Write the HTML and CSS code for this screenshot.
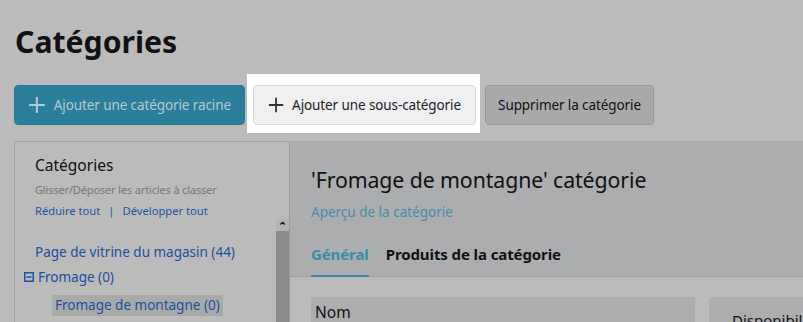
FILE: index.html
```html
<!DOCTYPE html>
<html lang="fr">
<head>
<meta charset="utf-8">
<title>Catégories</title>
<link rel="stylesheet" href="styles.css">
</head>
<body>
<div class="page">
  <h1 class="title">Catégories</h1>
  <div class="toolbar">
    <button class="btn btn-primary">
      <svg class="plus" viewBox="0 0 18 18" width="18" height="18"><path d="M9 1v16M1 9h16" stroke="currentColor" stroke-width="2" fill="none"/></svg>
      Ajouter une catégorie racine
    </button>
    <div class="spotlight">
      <button class="btn btn-light">
        <svg class="plus" viewBox="0 0 18 18" width="18" height="18"><path d="M9 1v16M1 9h16" stroke="currentColor" stroke-width="2" fill="none"/></svg>
        Ajouter une sous-catégorie
      </button>
    </div>
    <button class="btn btn-gray">Supprimer la catégorie</button>
  </div>
  <div class="layout">
    <aside class="sidebar">
      <div class="side-head">
        <div class="side-title">Catégories</div>
        <div class="side-hint">Glisser/Déposer les articles à classer</div>
        <div class="side-links"><a>Réduire tout</a><span class="sep">|</span><a>Développer tout</a></div>
      </div>
      <div class="tree">
        <ul class="tree-list">
          <li class="node root"><a>Page de vitrine du magasin (44)</a></li>
          <li class="node parent">
            <svg class="toggle" viewBox="0 0 10 10" width="10" height="10"><rect x="0.75" y="0.75" width="8.5" height="8.5" fill="none" stroke="currentColor" stroke-width="1.5"/><path d="M2.5 5h5" stroke="currentColor" stroke-width="1.5"/></svg>
            <a>Fromage (0)</a>
          </li>
          <li class="node child"><a class="selected">Fromage de montagne (0)</a></li>
        </ul>
        <div class="scrollbar"><span class="arrow">&#8963;</span><span class="thumb"></span></div>
      </div>
    </aside>
    <main class="main">
      <div class="main-head">
        <h2 class="cat-title">'Fromage de montagne' catégorie</h2>
        <a class="preview">Aperçu de la catégorie</a>
        <nav class="tabs">
          <span class="tab active">Général</span>
          <span class="tab">Produits de la catégorie</span>
        </nav>
      </div>
      <div class="main-body">
        <section class="card card-wide"><div class="card-label">Nom</div></section>
        <section class="card card-side"><div class="card-label2">Disponibilité</div></section>
      </div>
    </main>
  </div>
</div>
</body>
</html>
```
FILE: styles.css
```css
* { box-sizing: border-box; }
html, body { margin: 0; padding: 0; }
body {
  background: #bbbbbb;
  font-family: "Noto Sans", "Open Sans", sans-serif;
  color: #111;
  overflow: hidden;
  width: 803px;
  height: 322px;
}
.page { padding: 0 0 0 14px; }
.title {
  margin: 0;
  padding-top: 22px;
  font-size: 30.2px;
  line-height: 40px;
  font-weight: 700;
  letter-spacing: 0;
  padding-left: 1px;
  height: 85px;
}
.toolbar { display: flex; gap: 8px; align-items: flex-start; }
.btn {
  font-family: inherit;
  font-size: 13.5px;
  height: 40px;
  border-radius: 4px;
  display: flex;
  align-items: center;
  gap: 8px;
  padding: 0 13px;
  cursor: pointer;
  white-space: nowrap;
  letter-spacing: -0.1px;
}
.btn-primary {
  width: 231px;
  background: #2c7f9b;
  border: 1px solid #2a7a95;
  color: #b5c8d0;
}
.spotlight {
  background: #ffffff;
  padding: 11px 4px 8px 6px;
  margin: -11px -4px -8px -6px;
}
.btn-light {
  width: 223px;
  background: #eef0f2;
  border: 1px solid #d5d9dd;
  color: #222;
  padding: 0 14px;
}
.btn-light .plus { color: #333; }
.btn-gray {
  width: 169px;
  background: #a9a9a9;
  border: 1px solid #979797;
  color: #111;
  justify-content: center;
  margin-left: 1px;
}
.layout {
  display: flex;
  margin-top: 16px;
  border-top: 1px solid #a2a2a2;
  height: 200px;
}
.sidebar {
  flex: 0 0 276px;
  width: 276px;
  border-left: 1px solid #a5a5a5;
  border-right: 1px solid #9c9c9c;
  background: #bbbbbb;
  display: flex;
  flex-direction: column;
}
.side-head { padding: 12px 0 0 20px; height: 77px; }
.side-title { font-size: 15.5px; line-height: 22px; }
.side-hint { font-size: 11px; line-height: 16px; color: #777; margin-top: 6px; letter-spacing: -0.15px; }
.side-links { font-size: 11.2px; line-height: 16px; color: #1d55a3; margin-top: 5px; }
.side-links .sep { margin: 0 8px; }
.tree { position: relative; flex: 1; }
.tree-list { list-style: none; margin: 0; padding: 23px 0 0 0; }
.node { font-size: 13.5px; line-height: 20px; color: #1a4f9e; display: flex; align-items: center; }
.node.root { padding-left: 20px; margin-bottom: 5px; }
.node.parent { padding-left: 9px; gap: 4px; margin-bottom: 8px; }
.toggle { color: #1d55a3; }
.node.child { padding-left: 37px; }
.selected { background: #a9a9a9; padding: 0 3px; line-height: 21px; }
.scrollbar {
  position: absolute;
  right: 0;
  top: 0;
  width: 13px;
  bottom: 0;
  display: flex;
  flex-direction: column;
}
.arrow {
  height: 12px;
  background: #b3b3b3;
  font-size: 11px;
  line-height: 14px;
  text-align: center;
  color: #111;
  font-weight: 700;
}
.thumb { flex: 1; background: #8b8b8b; }
.main { flex: 1; background: #bbbbbb; min-width: 0; }
.main-head {
  background: #acadaf;
  padding: 24px 0 0 21px;
  border-bottom: 1px solid #9f9fa1;
  height: 135px;
  display: flex;
  flex-direction: column;
  align-items: flex-start;
}
.cat-title { margin: 0; font-size: 21.3px; line-height: 28px; font-weight: 400; letter-spacing: -0.1px; }
.preview { display: block; font-size: 13.5px; line-height: 18px; color: #468bad; margin-top: 9px; }
.tabs { display: flex; gap: 17px; margin-top: auto; margin-bottom: -1px; }
.tab { font-size: 15px; font-weight: 700; line-height: 20px; padding-bottom: 11px; letter-spacing: -0.1px; }
.tab.active { color: #3a8aaa; border-bottom: 2px solid #3a8aaa; }
.tab:not(.active) { border-bottom: 2px solid transparent; }
.main-body { display: flex; gap: 14px; padding: 20px 0 0 21px; }
.card { background: #acadaf; height: 60px; }
.card-wide { flex: 0 0 384px; }
.card-side { flex: 1; min-width: 0; overflow: hidden; }
.card-label { font-size: 15.5px; line-height: 20px; padding: 5px 0 0 4px; }
.card-label2 { font-size: 15px; line-height: 20px; padding: 13px 0 0 23px; white-space: nowrap; }
```
